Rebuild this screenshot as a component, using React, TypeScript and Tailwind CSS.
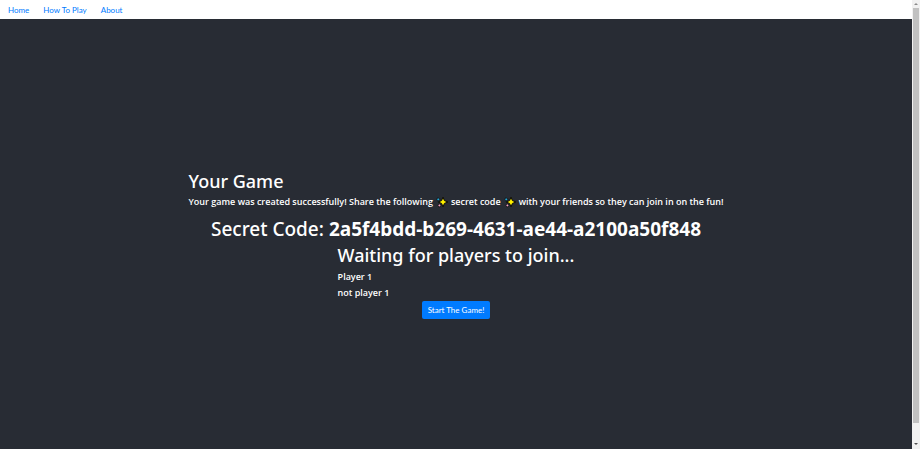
const links = ['Home', 'How To Play', 'About'];
const players = ['Player 1', 'not player 1'];

function Sparkles() {
  return (
    <svg role="img" aria-label="sparkles" viewBox="0 0 12 12" className="mx-[3px] h-3 w-3 shrink-0">
      <path d="M7 1 8.4 4.6 12 6 8.4 7.4 7 11 5.6 7.4 2 6 5.6 4.6Z" fill="#fff100" stroke="#0b0b0b" strokeWidth="1" />
      <path d="M2.2 1 2.8 2.7 4.5 3.3 2.8 3.9 2.2 5.6 1.6 3.9 0 3.3 1.6 2.7Z" fill="#28b6e8" stroke="#0b0b0b" strokeWidth="0.5" />
      <path d="M3.4 7.2 4 8.8 5.6 9.4 4 10 3.4 11.6 2.8 10 1.2 9.4 2.8 8.8Z" fill="#f4a3c4" stroke="#0b0b0b" strokeWidth="0.5" />
    </svg>
  );
}

function PageScrollbar() {
  return (
    <div aria-hidden="true" className="flex w-2 shrink-0 flex-col items-center bg-[#f1f1f1]">
      <div className="flex h-2 items-center">
        <svg viewBox="0 0 4 2" className="h-[2px] w-1"><path d="M0 2 2 0 4 2Z" fill="#8a8a8a" /></svg>
      </div>
      <div className="w-[6px] flex-1 bg-[#c1c1c1]" />
      <div className="flex h-[26px] items-end pb-1">
        <svg viewBox="0 0 4 2" className="h-[2px] w-1"><path d="M0 0 2 2 4 0Z" fill="#505050" /></svg>
      </div>
    </div>
  );
}

export default function App() {
  return (
    <div className="flex h-screen bg-[#282c34] font-['Open_Sans','Noto_Sans',sans-serif] text-white">
      <div className="flex min-w-0 flex-1 flex-col">
        <nav className="flex h-[19px] shrink-0 items-center gap-[14px] bg-white px-2 pt-[1px] font-['Lato','Open_Sans',sans-serif] text-[8px] text-[#007bff]">
          {links.map((link) => (
            <a key={link} href="#">{link}</a>
          ))}
        </nav>
        <main className="flex flex-1 flex-col items-center justify-center pt-5">
          <section>
            <h1 className="pb-[1px] font-['Noto_Sans','Open_Sans',sans-serif] text-[18px] font-medium leading-[23px]">Your Game</h1>
            <h5 className="flex items-center whitespace-pre text-[9px] font-semibold leading-4">
              Your game was created successfully! Share the following
              <Sparkles />
              secret code
              <Sparkles />
              with your friends so they can join in on the fun!
            </h5>
          </section>
          <h1 className="mt-[6px] font-['Noto_Sans','Open_Sans',sans-serif] text-[19px] font-medium leading-[26px]">
            Secret Code: <b className="font-bold">2a5f4bdd-b269-4631-ae44-a2100a50f848</b>
          </h1>
          <section className="pt-[1px]">
            <h1 className="pb-[1px] font-['Noto_Sans','Open_Sans',sans-serif] text-[18px] font-medium leading-[25px]">Waiting for players to join...</h1>
            {players.map((player) => (
              <h5 key={player} className="text-[9px] font-semibold leading-4">{player}</h5>
            ))}
          </section>
          <button type="button" className="h-[18px] rounded-[2px] bg-[#007bff] px-[6px] font-['Lato','Open_Sans',sans-serif] text-[8px]">
            Start The Game!
          </button>
        </main>
      </div>
      <PageScrollbar />
    </div>
  );
}
